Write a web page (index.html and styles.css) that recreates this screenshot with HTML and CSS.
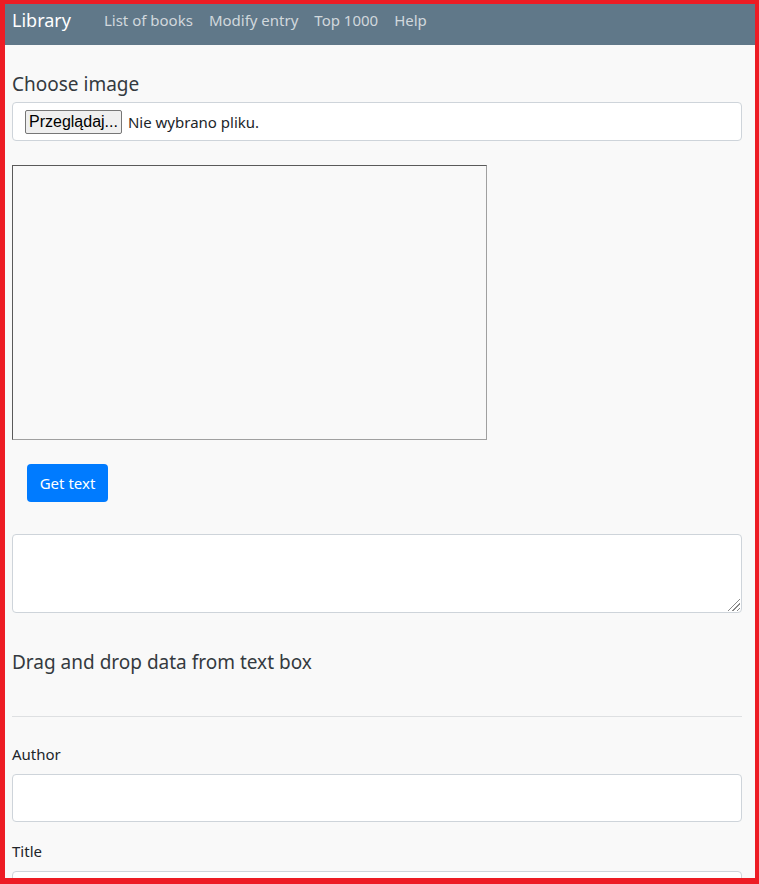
FILE: index.html
```html
<!DOCTYPE html>
<html lang="en">
<head>
<meta charset="utf-8">
<title>Library</title>
<link rel="stylesheet" href="styles.css">
</head>
<body>
<div class="frame"></div>
<nav class="navbar">
  <span class="brand">Library</span>
  <ul class="nav">
    <li>List of books</li>
    <li>Modify entry</li>
    <li>Top 1000</li>
    <li>Help</li>
  </ul>
</nav>
<main class="main">
  <h5 class="title">Choose image</h5>
  <div class="file-box">
    <span class="file-btn">Przeglądaj...</span>
    <span class="file-name">Nie wybrano pliku.</span>
  </div>
  <div class="canvas"></div>
  <div class="btn-row"><button class="btn">Get text</button></div>
  <div class="textarea"><span class="grip"></span></div>
  <h5 class="title drag">Drag and drop data from text box</h5>
  <hr class="rule">
  <label class="label">Author</label>
  <div class="input"></div>
  <label class="label">Title</label>
  <div class="input"></div>
</main>
</body>
</html>
```

FILE: styles.css
```css
* { box-sizing: border-box; }
html, body { margin: 0; }
body {
  background: #f9f9f9;
  padding: 4px 4px 0 5px;
  font-family: "Noto Sans", "Open Sans", sans-serif;
  color: #343a40;
  font-size: 16px;
}
.frame {
  position: fixed;
  inset: 0;
  border-style: solid;
  border-color: #ed1c24;
  border-width: 4px 4px 6px 5px;
  pointer-events: none;
  z-index: 10;
}
.navbar {
  display: flex;
  align-items: center;
  height: 41px;
  background: #607889;
  padding: 0 7px 10px;
}
.brand {
  color: #fff;
  font-size: 18px;
  margin-right: 33px;
}
.nav {
  display: flex;
  gap: 16px;
  list-style: none;
  margin: 0;
  padding: 0;
}
.nav li {
  color: rgba(255,255,255,0.72);
  font-size: 15px;
}
.main {
  padding: 0 13px 0 7px;
}
.title {
  font-size: 19px;
  font-weight: 400;
  margin: 27px 0 6px;
  line-height: 24px;
}
.file-box {
  display: flex;
  align-items: center;
  height: 39px;
  background: #fff;
  border: 1px solid #ced4da;
  border-radius: 4px;
  padding: 0 12px;
}
.file-btn {
  font-family: "Liberation Sans", Arial, sans-serif;
  font-size: 16px;
  color: #000;
  background: #efefef;
  border: 1px solid #767676;
  border-radius: 2px;
  padding: 2px 3px;
  line-height: 18px;
  margin-right: 6px;
}
.file-name {
  font-size: 15px;
  color: #212529;
}
.canvas {
  width: 475px;
  height: 275px;
  margin-top: 24px;
  border-style: solid;
  border-width: 1px;
  border-color: #5a5a5a #a0a0a0 #a0a0a0 #5a5a5a;
}
.btn-row {
  padding: 24px 15px 32px;
}
.btn {
  display: block;
  width: 81px;
  height: 38px;
  background: #007bff;
  color: #fff;
  border: 0;
  border-radius: 4px;
  font-family: inherit;
  font-size: 15px;
  padding: 0;
}
.textarea {
  position: relative;
  height: 79px;
  background: #fff;
  border: 1px solid #ced4da;
  border-radius: 4px;
}
.grip {
  position: absolute;
  right: 1px;
  bottom: 1px;
  width: 14px;
  height: 14px;
  background: repeating-linear-gradient(135deg, transparent 0 2px, #888 2px 3px);
  clip-path: polygon(100% 0, 100% 100%, 0 100%);
}
.drag {
  margin-top: 37px;
}
.rule {
  border: 0;
  border-top: 1px solid #dee0e2;
  margin: 42px 0 0;
}
.label {
  display: block;
  font-size: 15px;
  color: #212529;
  margin: 25px 0 8px;
  line-height: 24px;
}
.input {
  height: 48px;
  background: #fff;
  border: 1px solid #ced4da;
  border-radius: 4px;
}
.input + .label { margin-top: 17px; }
```
